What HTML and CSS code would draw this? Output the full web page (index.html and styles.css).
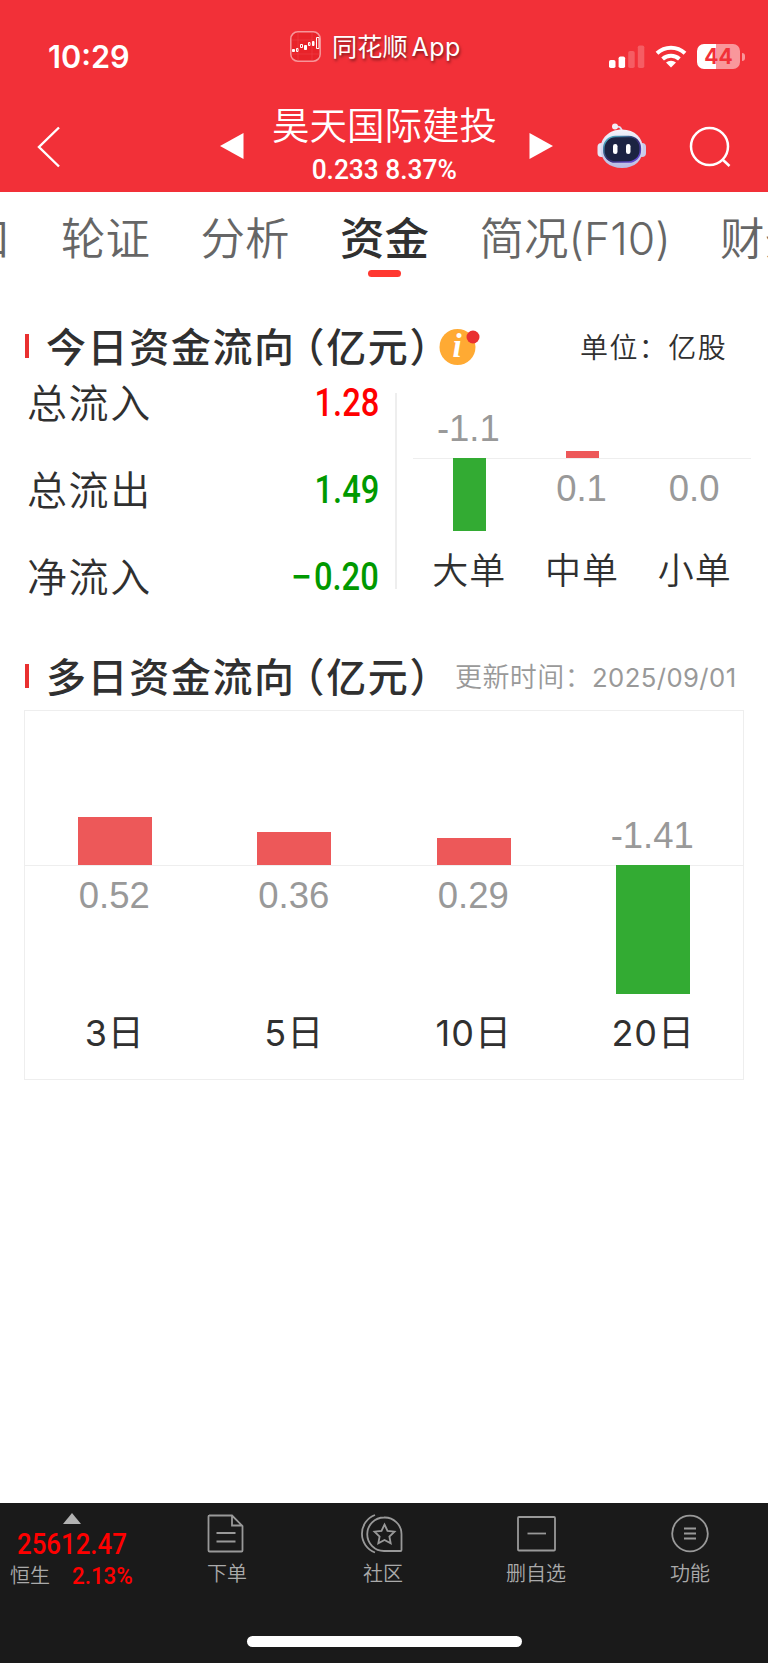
FILE: index.html
```html
<!DOCTYPE html>
<html lang="zh-CN">
<head>
  <meta charset="UTF-8" />
  <title>昊天国际建投 - 资金</title>
  <link rel="stylesheet" href="styles.css">
</head>
<body>
  <header>
    <div class="status">
      <span class="time">10:29</span>
      <div class="app">
        <svg width="31" height="31" viewBox="0 0 31 31">
          <rect x="0.8" y="0.8" width="29.4" height="29.4" rx="7" fill="#e8232a" stroke="#f79599" stroke-width="1.5"/>
          <path d="M8 2v27M22 2v27M2 9h27M2 23h27" stroke="#f0474c" stroke-width="0.5"/>
          <g fill="#fff" stroke="#fff" stroke-width="1">
            <path d="M2.5 18.500h2v2h-2zM14.500 14.500h2v4h-2zM22.500 10.500h1.500v4h-1.500z"/>
            <path fill="none" d="M6.500 17.500h1.500v3h-1.500zM10.500 13.500h2v3h-2zM18.500 11.500h1.500v3h-1.500zM26.500 6.500h2.500v11h-2.500z"/>
          </g>
        </svg>
        <span class="app-name">同花顺<i>App</i></span>
      </div>
      <div class="status-icons">
        <svg width="36" height="23" viewBox="0 0 36 23" fill="#fff">
          <rect x="0" y="15" width="6.500" height="8" rx="1.800"/>
          <rect x="9.600" y="11.500" width="6.500" height="11.500" rx="1.800"/>
          <rect x="19.200" y="6" width="6.500" height="17" rx="1.800" opacity=".22"/>
          <rect x="28.800" y="0.500" width="6.500" height="22.500" rx="1.800" opacity=".22"/>
        </svg>
        <svg class="wifi" width="32" height="24" viewBox="0 0 32 24">
          <g fill="none" stroke="#fff" stroke-width="4">
            <path d="M2 9.300A20.500 20.500 0 0 1 30 9.300"/>
            <path d="M7.600 15A12.500 12.500 0 0 1 24.400 15"/>
          </g>
          <path d="M16 23.500l-5-4.900a7.400 7.400 0 0 1 10 0z" fill="#fff"/>
        </svg>
        <div class="battery">44</div>
        <div class="battery-cap"></div>
      </div>
    </div>
    <div class="nav">
      <svg class="back" width="26" height="44" viewBox="0 0 26 44"><path d="M23 2.500L3 22l20 19.500" fill="none" stroke="#fff" stroke-width="2.400"/></svg>
      <svg width="24" height="28" viewBox="0 0 24 28"><path d="M0 14L23.500 1v26z" fill="#fff"/></svg>
      <div class="stock">
        <h1>昊天国际建投</h1>
        <p><span class="din">0.233 8.37%</span></p>
      </div>
      <svg width="24" height="28" viewBox="0 0 24 28"><path d="M24 14L0.500 1v26z" fill="#fff"/></svg>
      <svg class="robot" width="50" height="46" viewBox="0 0 50 46">
        <defs>
          <linearGradient id="shell" x1="0" y1="0" x2="0" y2="1">
            <stop offset="0" stop-color="#f4f4fb"/>
            <stop offset="1" stop-color="#b9bbe2"/>
          </linearGradient>
          <linearGradient id="rim" x1="0" y1="0" x2="1" y2="1">
            <stop offset="0" stop-color="#54c8d6"/>
            <stop offset=".5" stop-color="#302a68"/>
            <stop offset="1" stop-color="#7152ec"/>
          </linearGradient>
        </defs>
        <path d="M18 4q7-2 7 6" fill="none" stroke="#dcdcf0" stroke-width="1.800"/>
        <circle cx="18" cy="3.500" r="3" fill="#f3eef7"/>
        <rect x="0.500" y="20" width="8" height="14" rx="4" fill="#e6e6f5"/>
        <rect x="41" y="20" width="8" height="14" rx="4" fill="#c9caea"/>
        <path d="M25 6.500C38 6.500 46 15 46 26S38 45 25 45 3.500 37 3.500 26 12 6.500 25 6.500z" fill="url(#shell)"/>
        <rect x="6.800" y="13.500" width="36.500" height="25.500" rx="11.500" fill="#1c2342" stroke="url(#rim)" stroke-width="1.600"/>
        <rect x="16" y="21" width="4.500" height="10" rx="2.200" fill="#fff"/>
        <rect x="29" y="21" width="4.500" height="10" rx="2.200" fill="#fff"/>
      </svg>
      <svg class="search" width="42" height="42" viewBox="0 0 42 42" fill="none" stroke="#fff" stroke-width="2.500">
        <circle cx="20.500" cy="20.500" r="18.500"/>
        <path d="M33.500 33.500l7 6.500"/>
      </svg>
    </div>
  </header>

  <nav class="tabs">
    <a>盘口</a>
    <a>轮证</a>
    <a>分析</a>
    <a class="active">资金</a>
    <a class="wide">简况<i>(F10)</i></a>
    <a>财务</a>
  </nav>

  <section class="today">
    <div class="section-head">
      <h2>今日资金流向<b class="open">（</b>亿元<b>）</b></h2>
      <svg class="info" width="42" height="38" viewBox="0 0 42 38">
        <circle cx="18.500" cy="20" r="18" fill="#ffaa33"/>
        <text x="18" y="30" text-anchor="middle">i</text>
        <circle cx="34" cy="10" r="6.500" fill="#e93030"/>
      </svg>
      <span class="unit">单位：亿股</span>
    </div>
    <div class="today-body">
      <div class="totals">
        <div class="row"><span>总流入</span><span class="din up">1.28</span></div>
        <div class="row"><span>总流出</span><span class="din down">1.49</span></div>
        <div class="row"><span>净流入</span><span class="din down"><i>−</i>0.20</span></div>
      </div>
      <div class="orders">
        <div class="col">
          <div class="above"><span class="num">-1.1</span></div>
          <div class="below"><div class="bar green" style="height:73px"></div></div>
          <span class="label">大单</span>
        </div>
        <div class="col">
          <div class="above"><div class="bar red" style="height:7px"></div></div>
          <div class="below"><span class="num">0.1</span></div>
          <span class="label">中单</span>
        </div>
        <div class="col">
          <div class="above"></div>
          <div class="below"><span class="num">0.0</span></div>
          <span class="label">小单</span>
        </div>
      </div>
    </div>
  </section>

  <section class="multi">
    <div class="section-head">
      <h2>多日资金流向<b class="open">（</b>亿元<b>）</b></h2>
      <span class="updated">更新时间：<i>2025/09/01</i></span>
    </div>
    <div class="days">
      <div class="col">
        <div class="above"><div class="bar red" style="height:48px"></div></div>
        <div class="below"><span class="num">0.52</span></div>
        <span class="label">3日</span>
      </div>
      <div class="col">
        <div class="above"><div class="bar red" style="height:33px"></div></div>
        <div class="below"><span class="num">0.36</span></div>
        <span class="label">5日</span>
      </div>
      <div class="col">
        <div class="above"><div class="bar red" style="height:27px"></div></div>
        <div class="below"><span class="num">0.29</span></div>
        <span class="label">10日</span>
      </div>
      <div class="col">
        <div class="above"><span class="num">-1.41</span></div>
        <div class="below"><div class="bar green" style="height:129px"></div></div>
        <span class="label">20日</span>
      </div>
    </div>
  </section>

  <footer>
    <div class="menu">
      <div class="index">
        <div class="arrow"></div>
        <div class="point"><span class="din">25612.47</span></div>
        <div class="change"><span>恒生</span><span class="din">2.13%</span></div>
      </div>
      <div class="item">
        <svg width="42" height="42" viewBox="0 0 42 42">
          <path d="M4 3.500h23L37.500 14v24.500a1 1 0 0 1-1 1h-32a1 1 0 0 1-1-1v-34a1 1 0 0 1 1-1zM27 3.500V13.500h10.500M11.500 21h19M11.500 29.500h19"/>
        </svg>
        <span>下单</span>
      </div>
      <div class="item">
        <svg width="42" height="42" viewBox="0 0 42 42">
          <path d="M14 3a20 20 0 0 0 0 37.500"/>
          <path d="M23 5.500a16.700 16.700 0 1 0 0 33.500h16.500a1 1 0 0 0 1-1V22A16.700 16.700 0 0 0 23 5.500z"/>
          <path d="M23.500 12.500l3 6.300 7 .9-5.100 4.800 1.300 6.900-6.200-3.400-6.200 3.400 1.300-6.900-5.100-4.800 7-.9z"/>
        </svg>
        <span>社区</span>
      </div>
      <div class="item">
        <svg width="42" height="42" viewBox="0 0 42 42">
          <rect x="4" y="5" width="37" height="33.500" rx="1"/>
          <path d="M13.500 21.500h18.500"/>
        </svg>
        <span>删自选</span>
      </div>
      <div class="item">
        <svg width="42" height="42" viewBox="0 0 42 42">
          <circle cx="22" cy="21.500" r="17.800"/>
          <path d="M16 16.500h12M16 21.500h12M16 26.500h12"/>
        </svg>
        <span>功能</span>
      </div>
    </div>
    <div class="home"></div>
  </footer>
</body>
</html>
```
FILE: styles.css
```css
* {
  box-sizing: border-box;
}

body {
  margin: 0;
  width: 768px;
  height: 1663px;
  display: flex;
  flex-direction: column;
  overflow: hidden;
  background: #fff;
  color: #303030;
  font-family: Inter, "Noto Sans CJK SC", sans-serif;
}

h1, h2, p {
  margin: 0;
}

i, b {
  font-style: normal;
  font-weight: inherit;
}

svg {
  display: block;
  flex-shrink: 0;
}

/* narrow digits */
.din {
  display: inline-block;
  font-family: Roboto, sans-serif;
  font-weight: 500;
  transform: scaleX(0.86);
  white-space: nowrap;
}

header {
  height: 192px;
  background: #f23038;
  color: #fff;
}

.status {
  display: flex;
  height: 96px;
  padding: 31px 23px 0 48px;
}

.time {
  width: 242px;
  padding-top: 7px;
  font-size: 30.700px;
  line-height: 38px;
  font-weight: 600;
}

.app {
  display: flex;
  width: 319px;
}

.app-name {
  margin: -4px 0 0 11px;
  font-family: "Noto Sans CJK SC", sans-serif;
  font-size: 25.200px;
  line-height: 36px;
  text-shadow: 1px 2px 3px rgba(0, 0, 0, 0.5);
}

.app-name i {
  margin-left: 4px;
  font-family: Inter;
  font-size: 25px;
  letter-spacing: 0.500px;
}

.status-icons {
  display: flex;
  padding-top: 13px;
}

.status-icons svg {
  margin-top: 1px;
}

.status-icons .wifi {
  margin: 0 10px;
}

.battery {
  width: 43px;
  height: 25px;
  border-radius: 7px;
  background: linear-gradient(to right, #fff 19px, #f9979b 19px);
  color: #f23038;
  font-size: 21px;
  line-height: 25px;
  font-weight: 700;
  text-align: center;
}

.battery-cap {
  width: 3px;
  height: 8px;
  margin: 9px 0 0 2px;
  border-radius: 0 4px 4px 0;
  background: #f9979b;
}

.nav {
  display: flex;
  align-items: flex-start;
  padding: 8px 0 0 36px;
}

.nav svg {
  margin-top: 28px;
}

.nav .back {
  margin: 21px 158px 0 0;
}

.stock {
  width: 285px;
  padding-right: 4px;
  text-align: center;
}

.stock h1 {
  font-size: 37.500px;
  line-height: 44px;
  font-weight: 350;
}

.stock p {
  font-size: 28px;
  line-height: 34px;
  margin-top: 4px;
}

.stock .din {
  transform: scaleX(0.94);
}

.nav .robot {
  margin: 19px 0 0 44px;
}

.nav .search {
  margin: 22px 0 0 42px;
}

.tabs {
  display: flex;
  gap: 50.500px;
  height: 98px;
  margin-left: -78.500px;
  padding-top: 15px;
  font-size: 44.500px;
  line-height: 64px;
  font-weight: 350;
  color: #666;
  white-space: nowrap;
}

.tabs a {
  position: relative;
  flex-shrink: 0;
}

.tabs .active {
  color: #303030;
  font-weight: 500;
}

.tabs .active::after {
  content: "";
  position: absolute;
  left: 28px;
  top: 63px;
  width: 33px;
  height: 7px;
  border-radius: 4px;
  background: #ff3830;
}

.wide {
  width: 190px;
}

.section-head {
  display: flex;
  height: 58px;
  padding-left: 25px;
}

.section-head::before {
  content: "";
  width: 4px;
  height: 24px;
  margin: 16px 17px 0 0;
  background: #e93030;
}

h2 {
  padding-top: 1px;
  font-size: 40px;
  line-height: 58px;
  font-weight: 500;
  letter-spacing: 1.600px;
  white-space: nowrap;
}

/* half-width brackets */
h2 b {
  font-feature-settings: "halt";
}

h2 .open {
  margin-left: 9px;
}

.today {
  padding-top: 28px;
  height: 358px;
}

.info {
  margin: 9px 0 0 8px;
}

.info text {
  font: italic bold 33px "Liberation Serif", serif;
  fill: #fff;
}

.unit {
  margin-left: 99px;
  padding-top: 1px;
  font-size: 28px;
  line-height: 58px;
  letter-spacing: 1.400px;
  font-weight: 350;
}

.today-body {
  display: flex;
}

.totals {
  display: flex;
  flex-direction: column;
  gap: 29px;
  width: 395px;
  height: 212px;
  margin-top: -1px;
  padding: 0 16px 0 27px;
}

.row {
  display: flex;
  justify-content: space-between;
  font-size: 40px;
  line-height: 58px;
  letter-spacing: 1.600px;
  font-weight: 350;
}

.row .din {
  margin-top: -1px;
  font-size: 38px;
  font-weight: 500;
  letter-spacing: 0;
  transform-origin: right;
}

.row .din i {
  display: inline-block;
  margin-right: 4px;
  transform: scaleX(1.150);
}

.up {
  color: #f00;
}

.down {
  color: #090;
}

.orders {
  display: flex;
  width: 356px;
  height: 196px;
  margin-top: 17px;
  padding-left: 16px;
  border-left: 2px solid #eee;
}

.col {
  display: flex;
  flex: 1;
  flex-direction: column;
  align-items: center;
}

.above {
  display: flex;
  flex-direction: column;
  flex-shrink: 0;
  justify-content: flex-end;
  align-items: center;
  width: 100%;
}

.below {
  display: flex;
  flex-direction: column;
  flex-shrink: 0;
  align-items: center;
  width: 100%;
  border-top: 1px solid #eee;
}

.bar {
  width: 33px;
}

.below .bar {
  margin-top: -1px;
}

.red {
  background: #ed5859;
}

.green {
  background: #33ab33;
}

.num {
  font-family: "Liberation Sans", sans-serif;
  font-size: 36.500px;
  line-height: 42px;
  color: #999;
}

.above .num {
  margin: 0 2px 8px 0;
}

.below .num {
  margin: 9px 1px 0 0;
}

.orders .above {
  height: 65px;
}

.orders .below {
  height: 87px;
}

.label {
  font-size: 36px;
  line-height: 52px;
  letter-spacing: 1px;
  font-weight: 350;
}

.multi {
  flex: 1;
}

.updated {
  margin-left: 24px;
  padding-top: 1px;
  font-size: 27px;
  line-height: 58px;
  letter-spacing: 0.400px;
  font-weight: 350;
  color: #999;
  white-space: nowrap;
}

.updated i {
  font-size: 25.700px;
  font-weight: 400;
}

.days {
  display: flex;
  width: 720px;
  height: 370px;
  margin: 4px 0 0 24px;
  border: 1px solid #eee;
}

.days .bar {
  width: 74px;
}

.days .label {
  font-weight: 400;
}

.days .above {
  height: 154px;
}

.days .below {
  height: 142px;
}

footer {
  height: 160px;
  background: #1a1a1a;
  color: #aaa;
}

.menu {
  display: grid;
  grid-template-columns: 149px 156px 156px 150px 158px;
  height: 133px;
}

.item {
  display: flex;
  flex-direction: column;
  align-items: center;
  padding-top: 9px;
  font-size: 20px;
  line-height: 30px;
  font-weight: 350;
}

.item svg {
  margin-left: -2px;
  fill: none;
  stroke: #999;
  stroke-width: 1.800;
}

.item span {
  margin-top: 5px;
}

.arrow {
  width: 18px;
  height: 11px;
  margin: 10px 0 0 63px;
  background: #b2b2b2;
  clip-path: polygon(50% 0, 100% 100%, 0 100%);
}

.point {
  margin: 3px 0 0 17px;
  color: #f00;
  font-size: 29px;
  line-height: 34px;
}

.point .din {
  transform: scaleX(0.890);
  transform-origin: left;
}

.change {
  display: flex;
  padding-left: 10px;
  font-size: 20px;
  line-height: 30px;
  font-weight: 350;
}

.change .din {
  margin-left: 22px;
  color: #f00;
  font-size: 24px;
  font-weight: 500;
  transform: scaleX(0.930);
  transform-origin: left;
}

.home {
  width: 275px;
  height: 11px;
  margin: 0 auto;
  border-radius: 6px;
  background: #fff;
}
```
